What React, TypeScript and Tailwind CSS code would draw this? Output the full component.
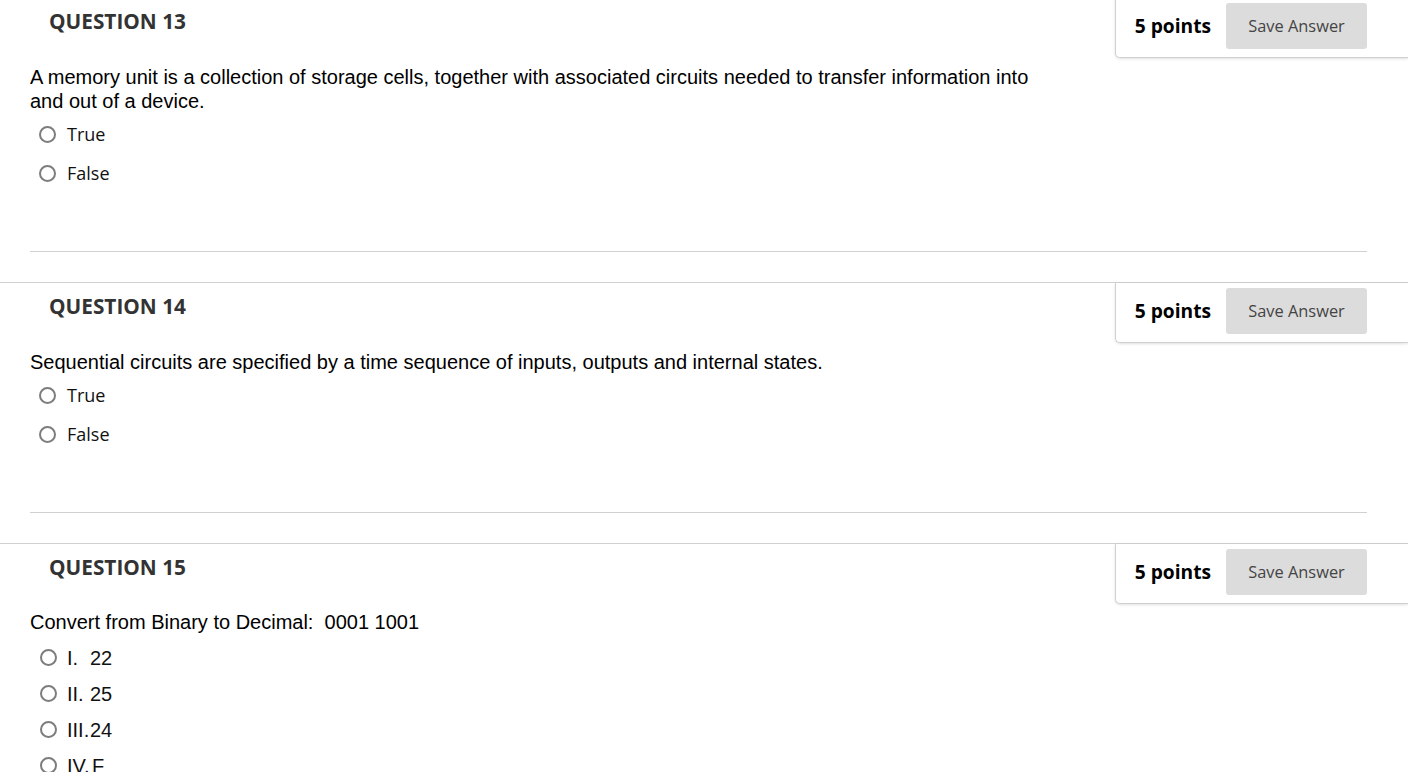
import React from "react";

const OPEN = "font-['Open_Sans',sans-serif]";
const ARIAL = "font-['Liberation_Sans',Arial,sans-serif]";

function Radio() {
  return (
    <span className="inline-block w-[17px] h-[17px] rounded-full border-[2px] border-[#7d7d7d] bg-white shrink-0" />
  );
}

function Header({ n }: { n: number }) {
  return (
    <div className="flex justify-between items-start">
      <div className={`${OPEN} pl-[49px] pt-[10px] text-[20.8px] leading-[26px] font-bold text-[#333] whitespace-nowrap`}>
        QUESTION {n}
      </div>
      <div className="w-[293px] h-[60px] border-l border-b border-[#d0d0d0] rounded-bl-[5px] shadow-[0_1px_3px_rgba(0,0,0,0.12)] flex items-start justify-end pr-[41px] pt-[5px] bg-white">
        <span className={`${OPEN} h-[46px] flex items-center text-[19.2px] font-bold text-black whitespace-nowrap`}>5 points</span>
        <button className={`${OPEN} ml-[15px] shrink-0 w-[141px] h-[46px] rounded-[3px] bg-[#dcdcdc] text-[16.4px] text-[#444] whitespace-nowrap`}>
          Save Answer
        </button>
      </div>
    </div>
  );
}

function TFOptions() {
  return (
    <div className="flex flex-col gap-[16px] pl-[9px]">
      {["True", "False"].map((t) => (
        <div key={t} className="flex items-center gap-[11px] h-[23px]">
          <Radio />
          <span className={`${OPEN} text-[18px] text-[#111]`}>{t}</span>
        </div>
      ))}
    </div>
  );
}

export default function App() {
  return (
    <div className="bg-white w-[1408px] min-h-[772px] overflow-hidden mt-[-3px]">
      {/* Q13 */}
      <div className="border-t border-[#d0d0d0]">
        <Header n={13} />
        <div className="pl-[30px] pr-[41px]">
          <p className={`${ARIAL} text-[20px] leading-[24px] text-black mt-[7px] w-[1030px]`}>
            A memory unit is a collection of storage cells, together with associated circuits needed to transfer information into and out of a device.
          </p>
          <div className="mt-[10px]">
            <TFOptions />
          </div>
          <div className="mt-[66px] border-b border-[#d0d0d0]" />
        </div>
        <div className="h-[30px]" />
      </div>
      {/* Q14 */}
      <div className="border-t border-[#d0d0d0]">
        <Header n={14} />
        <div className="pl-[30px] pr-[41px]">
          <p className={`${ARIAL} text-[20px] leading-[24px] text-black mt-[7px]`}>
            Sequential circuits are specified by a time sequence of inputs, outputs and internal states.
          </p>
          <div className="mt-[10px]">
            <TFOptions />
          </div>
          <div className="mt-[66px] border-b border-[#d0d0d0]" />
        </div>
        <div className="h-[30px]" />
      </div>
      {/* Q15 */}
      <div className="border-t border-[#d0d0d0]">
        <Header n={15} />
        <div className="pl-[30px] pr-[41px]">
          <p className={`${ARIAL} text-[20px] leading-[24px] text-black mt-[6px] whitespace-pre`}>
            Convert from Binary to Decimal:  0001 1001
          </p>
          <div className="mt-[12px] flex flex-col gap-[13px] pl-[10px]">
            {[
              ["I.", "22", "w-[23px]"],
              ["II.", "25", "w-[23px]"],
              ["III.", "24", "w-[23px]"],
              ["IV.", "F", "w-[25px]"],
            ].map(([a, b, w]) => (
              <div key={a} className="flex items-center h-[23px]">
                <Radio />
                <span className={`${ARIAL} text-[20px] text-[#111] ml-[10px] inline-block whitespace-nowrap ${w}`}>{a}</span>
                <span className={`${ARIAL} text-[20px] text-[#111]`}>{b}</span>
              </div>
            ))}
          </div>
        </div>
      </div>
    </div>
  );
}
